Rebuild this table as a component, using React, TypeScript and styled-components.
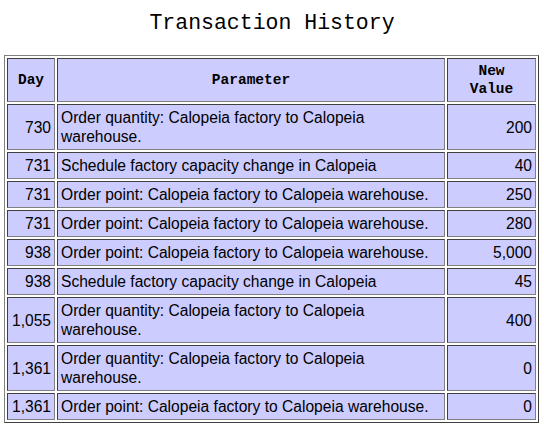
import styled, { createGlobalStyle } from 'styled-components'

const GlobalStyle = createGlobalStyle`
  body {
    margin: 0;
    background: #fff;
    color: #000;
  }
`

const Page = styled.div`
  width: 544px;
`

const Title = styled.h1`
  margin: 0;
  padding: 11px 0 20px;
  text-align: center;
  font-family: 'Liberation Mono', 'DejaVu Sans Mono', monospace;
  font-weight: normal;
  font-size: 21.5px;
  line-height: 24px;
`

const Table = styled.table`
  margin-left: 4px;
  width: 535px;
  table-layout: fixed;
  border-collapse: separate;
  border-spacing: 2px;
  border: 1px solid;
  border-color: #808080 #404040 #404040 #808080;
`

const Head = styled.th<{ $w: number }>`
  box-sizing: border-box;
  width: ${(p) => p.$w}px;
  padding: 3px;
  background: #ccccff;
  border: 1px solid;
  border-color: #404040 #808080 #808080 #404040;
  font-family: 'Liberation Mono', 'DejaVu Sans Mono', monospace;
  font-weight: bold;
  font-size: 14.5px;
  line-height: 18px;
  text-align: center;
`

const Cell = styled.td<{ $right?: boolean }>`
  padding: 3px;
  background: #ccccff;
  border: 1px solid;
  border-color: #404040 #808080 #808080 #404040;
  font-family: 'Liberation Sans', Arial, sans-serif;
  font-size: 15.6px;
  line-height: 19px;
  text-align: ${(p) => (p.$right ? 'right' : 'left')};
  vertical-align: middle;
`

const rows = [
  ['730', 'Order quantity: Calopeia factory to Calopeia warehouse.', '200'],
  ['731', 'Schedule factory capacity change in Calopeia', '40'],
  ['731', 'Order point: Calopeia factory to Calopeia warehouse.', '250'],
  ['731', 'Order point: Calopeia factory to Calopeia warehouse.', '280'],
  ['938', 'Order point: Calopeia factory to Calopeia warehouse.', '5,000'],
  ['938', 'Schedule factory capacity change in Calopeia', '45'],
  ['1,055', 'Order quantity: Calopeia factory to Calopeia warehouse.', '400'],
  ['1,361', 'Order quantity: Calopeia factory to Calopeia warehouse.', '0'],
  ['1,361', 'Order point: Calopeia factory to Calopeia warehouse.', '0'],
]

const App = () => {
  return (
    <Page>
      <GlobalStyle />
      <Title>Transaction History</Title>
      <Table>
        <thead>
          <tr>
            <Head $w={48}>Day</Head>
            <Head $w={388}>Parameter</Head>
            <Head $w={89}>
              New
              <br />
              Value
            </Head>
          </tr>
        </thead>
        <tbody>
          {rows.map(([day, param, value], i) => (
            <tr key={i}>
              <Cell $right>{day}</Cell>
              <Cell>{param}</Cell>
              <Cell $right>{value}</Cell>
            </tr>
          ))}
        </tbody>
      </Table>
    </Page>
  )
}

export default App
